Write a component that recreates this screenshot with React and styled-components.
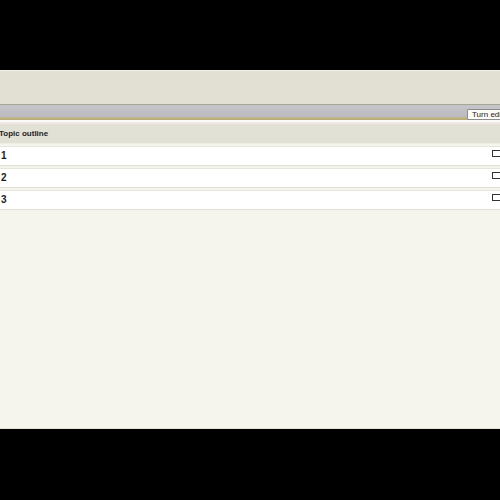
import React from 'react';
import styled, { createGlobalStyle } from 'styled-components';

const GlobalStyle = createGlobalStyle`
    html, body {
        margin : 0;
        padding : 0;
        background : #000;
        font-family : 'Liberation Sans', Arial, sans-serif;
    }
`;

const topics = ['1', '2', '3'];

const App = () => {
    return (
        <>
            <GlobalStyle />
            <Frame>
                <Screen>
                    <Header />
                    <NavBar>
                        <EditButton>Turn editing on</EditButton>
                    </NavBar>
                    <TanLine />
                    <Outline>
                        <OutlineHead>Topic outline</OutlineHead>
                        {topics.map((t) => (
                            <TopicRow key={t}>
                                <TopicNumber>{t}</TopicNumber>
                                <ToggleIcon />
                            </TopicRow>
                        ))}
                    </Outline>
                </Screen>
            </Frame>
        </>
    );
};

export default App;

const Frame = styled.div`
    width : 500px;
    height : 500px;
    padding-top : 70px;
    box-sizing : border-box;
    overflow : hidden;
    background : #000;
`;

const Screen = styled.div`
    height : 358px;
    background : #f5f5ee;
    border-bottom : 1px solid #e4e5d2;
    display : flex;
    flex-direction : column;
    overflow : hidden;
`;

const Header = styled.div`
    height : 33px;
    background : #e1e0d3;
    border-top : 1px solid #f3f2ea;
    border-bottom : 1px solid #a6a697;
`;

const NavBar = styled.div`
    height : 12px;
    background : linear-gradient(#c6c5c9, #bbbac2);
    position : relative;
`;

const EditButton = styled.button`
    position : absolute;
    top : 4px;
    left : 467px;
    height : 11px;
    padding : 0 4px;
    margin : 0;
    border : 1px solid #8c8c8c;
    border-radius : 1px;
    background : #fbfbf8;
    font-family : 'Liberation Sans', Arial, sans-serif;
    font-size : 8px;
    line-height : 9px;
    color : #222;
    white-space : nowrap;
    z-index : 2;
`;

const TanLine = styled.div`
    height : 3px;
    background : linear-gradient(#c2b98f, #b5a972);
    border-bottom : 2px solid #fbfaf6;
`;

const Outline = styled.div`
    display : flex;
    flex-direction : column;
    gap : 2px;
    border-top : 2px solid #f1e9e7;
`;

const OutlineHead = styled.div`
    height : 19px;
    background : #e2e1d6;
    border-bottom : 1px solid #eeede4;
    font-size : 8px;
    font-weight : bold;
    color : #222;
    line-height : 19px;
    margin-left : -1px;
`;

const TopicRow = styled.div`
    height : 18px;
    background : #fff;
    border-top : 1px solid #e6e6df;
    border-bottom : 1px solid #e0e0d8;
    display : flex;
    align-items : center;
    justify-content : space-between;
`;

const TopicNumber = styled.span`
    font-size : 10px;
    font-weight : bold;
    color : #1a1a1a;
    padding-left : 1px;
    margin-top : -1px;
`;

const ToggleIcon = styled.span`
    width : 7px;
    height : 5px;
    border : 1px solid #333;
    border-right : none;
    margin-top : -6px;
`;
